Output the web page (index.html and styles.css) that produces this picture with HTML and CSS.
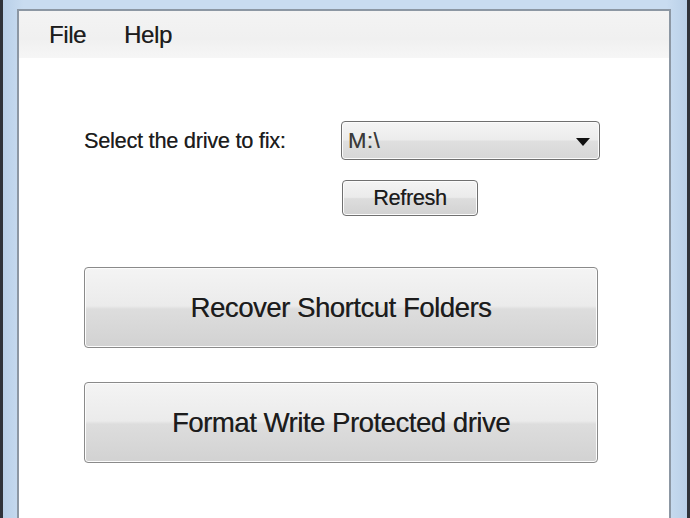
FILE: index.html
```html
<!DOCTYPE html>
<html lang="en">
<head>
<meta charset="utf-8">
<title>Shortcut Folder Fixer</title>
<link rel="stylesheet" href="styles.css">
</head>
<body>
<div class="window">
  <div class="client">
    <nav class="menubar">
      <span class="menu-item">File</span>
      <span class="menu-item">Help</span>
    </nav>
    <main class="content">
      <div class="drive-row">
        <label class="drive-label">Select the drive to fix:</label>
        <div class="drive-controls">
          <div class="combo">
            <span class="combo-value">M:\</span>
            <svg class="combo-arrow" width="14" height="8" viewBox="0 0 14 8"><path d="M0 0 H14 L7 8 Z" fill="#111"/></svg>
          </div>
          <button class="btn btn-small">Refresh</button>
        </div>
      </div>
      <button class="btn btn-big btn-recover">Recover Shortcut Folders</button>
      <button class="btn btn-big btn-format">Format Write Protected drive</button>
    </main>
  </div>
</div>
</body>
</html>
```
FILE: styles.css
```css
html, body {
  margin: 0;
  padding: 0;
  width: 690px;
  height: 518px;
  overflow: hidden;
  background: #2d3137;
}
.window {
  box-sizing: border-box;
  width: 690px;
  height: 518px;
  margin: 0;
  border-left: 3px solid #2f333a;
  border-right: 3px solid #2f333a;
  background: linear-gradient(90deg, #b9d0e8 0%, #c9dcf0 3%, #c9dcf0 97%, #b9d0e8 100%);
  padding: 9px 16px 0 14px;
  display: flex;
}
.client {
  flex: 1;
  background: #ffffff;
  border: 2px solid #8c97a3;
  border-bottom: none;
  display: flex;
  flex-direction: column;
  font-family: "Liberation Sans", Arial, sans-serif;
  color: #1c1c1c;
  text-shadow: 0.3px 0 0 rgba(30, 30, 30, 0.6);
}
.menubar {
  height: 47px;
  background: linear-gradient(180deg, #f3f3f3 0%, #f0f0f0 60%, #f6f6f6 100%);
  display: flex;
  align-items: center;
  padding-left: 30px;
  gap: 38px;
  font-size: 24px;
}
.menu-item {
  letter-spacing: -0.4px;
}
.content {
  padding: 63px 0 0 65px;
  display: flex;
  flex-direction: column;
}
.drive-row {
  display: grid;
  grid-template-columns: 257px 259px;
  align-items: start;
}
.drive-label {
  font-size: 21.6px;
  letter-spacing: -0.2px;
  line-height: 39px;
}
.drive-controls {
  display: flex;
  flex-direction: column;
  align-items: flex-start;
  gap: 20px;
}
.combo {
  box-sizing: border-box;
  width: 259px;
  height: 39px;
  border: 1px solid #6f6f6f;
  border-radius: 4px;
  background: linear-gradient(180deg, #f5f5f5 0%, #ececec 48%, #dfdfdf 52%, #d6d6d6 100%);
  box-shadow: inset 0 0 0 1px #fbfbfb;
  display: flex;
  align-items: center;
  justify-content: space-between;
  padding: 0 9px 0 6px;
}
.combo-value {
  font-size: 22px;
  color: #3a3a3a;
  letter-spacing: 0.5px;
}
.combo-arrow {
  display: block;
  margin-top: 2px;
}
.btn {
  box-sizing: border-box;
  font-family: "Liberation Sans", Arial, sans-serif;
  color: #1c1c1c;
  text-shadow: 0.3px 0 0 rgba(30, 30, 30, 0.6);
  border: 1px solid #707070;
  border-radius: 4px;
  background: linear-gradient(180deg, #f4f4f4 0%, #ebebeb 48%, #dddddd 52%, #d2d2d2 100%);
  box-shadow: inset 0 0 0 1px #fcfcfc;
  padding: 0;
  margin: 0;
  cursor: default;
}
.btn-small {
  width: 136px;
  height: 36px;
  font-size: 21.6px;
  letter-spacing: -0.3px;
  margin-left: 1px;
}
.btn-big {
  width: 514px;
  height: 81px;
  font-size: 27.6px;
  letter-spacing: -0.5px;
  border-color: #8a8a8a;
}
.btn-recover {
  margin-top: 51px;
}
.btn-format {
  margin-top: 34px;
}
```
